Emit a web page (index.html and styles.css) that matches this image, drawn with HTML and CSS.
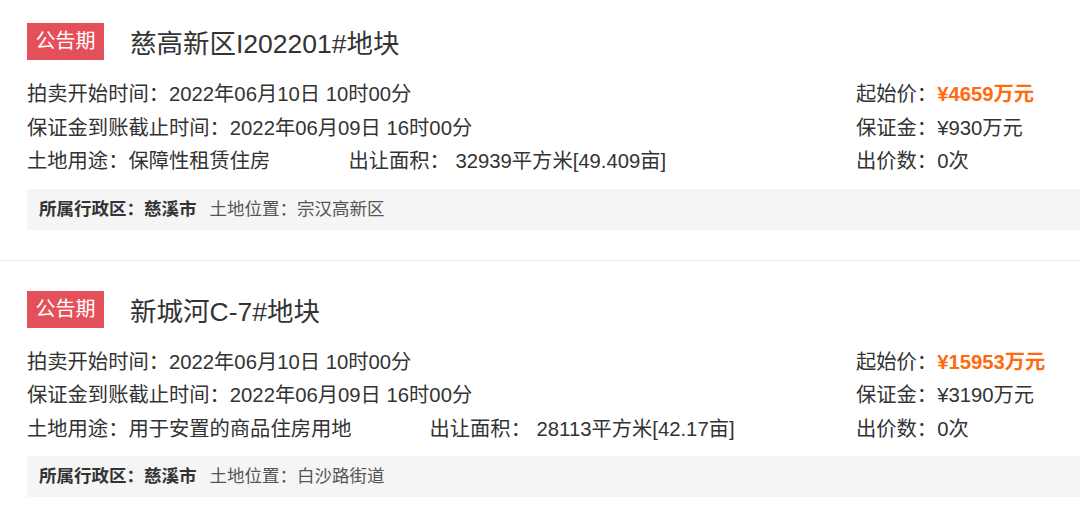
FILE: index.html
```html
<!DOCTYPE html>
<html lang="zh-CN">
<head>
  <meta charset="UTF-8">
  <title>土地拍卖列表</title>
  <link rel="stylesheet" href="styles.css">
</head>
<body>

<div class="list">

  <div class="item">
    <div class="item-head">
      <span class="badge">公告期</span>
      <span class="title">慈高新区I202201#地块</span>
    </div>
    <div class="item-body">
      <div class="info">
        <div class="row">拍卖开始时间：2022年06月10日 10时00分</div>
        <div class="row">保证金到账截止时间：2022年06月09日 16时00分</div>
        <div class="row"><span class="use">土地用途：保障性租赁住房</span>出让面积： 32939平方米[49.409亩]</div>
      </div>
      <div class="price">
        <div class="row">起始价：<span class="hl">¥4659万元</span></div>
        <div class="row">保证金：¥930万元</div>
        <div class="row">出价数：0次</div>
      </div>
    </div>
    <div class="extra">
      <b>所属行政区：慈溪市</b><span class="loc">土地位置：宗汉高新区</span>
    </div>
  </div>

  <div class="item">
    <div class="item-head">
      <span class="badge">公告期</span>
      <span class="title">新城河C-7#地块</span>
    </div>
    <div class="item-body">
      <div class="info">
        <div class="row">拍卖开始时间：2022年06月10日 10时00分</div>
        <div class="row">保证金到账截止时间：2022年06月09日 16时00分</div>
        <div class="row"><span class="use">土地用途：用于安置的商品住房用地</span>出让面积： 28113平方米[42.17亩]</div>
      </div>
      <div class="price">
        <div class="row">起始价：<span class="hl">¥15953万元</span></div>
        <div class="row">保证金：¥3190万元</div>
        <div class="row">出价数：0次</div>
      </div>
    </div>
    <div class="extra">
      <b>所属行政区：慈溪市</b><span class="loc">土地位置：白沙路街道</span>
    </div>
  </div>

</div>

</body>
</html>
```

FILE: styles.css
```css
body {
  margin: 0;
  background: #fff;
  color: #333;
  font-family: "Liberation Sans", "Noto Sans CJK SC", sans-serif;
  overflow: hidden;
}
.list {
  margin-top: -7px;
}
.item {
  padding: 30px 0 30px 27px;
  border-bottom: 1px solid #ececec;
}
.item-head {
  display: flex;
  align-items: center;
  height: 37px;
}
.badge {
  width: 77px;
  height: 37px;
  line-height: 37px;
  text-align: center;
  background-color: #e4505a;
  color: #fff;
  font-size: 20px;
}
.title {
  margin-left: 26px;
  font-size: 26.5px;
  color: #333;
}
.item-body {
  display: flex;
  margin-top: 18px;
}
.info {
  flex: 1;
}
.row {
  font-size: 20.3px;
  line-height: 33.5px;
  white-space: nowrap;
}
.use {
  margin-right: 78px;
}
.price {
  width: 224px;
}
.hl {
  color: #ff6a0c;
  font-weight: bold;
}
.extra {
  margin-top: 10px;
  height: 41px;
  line-height: 41px;
  padding-left: 12px;
  background-color: #f5f5f5;
  font-size: 17.5px;
}
.extra b {
  color: #333;
}
.loc {
  margin-left: 13px;
  color: #555;
}
```
